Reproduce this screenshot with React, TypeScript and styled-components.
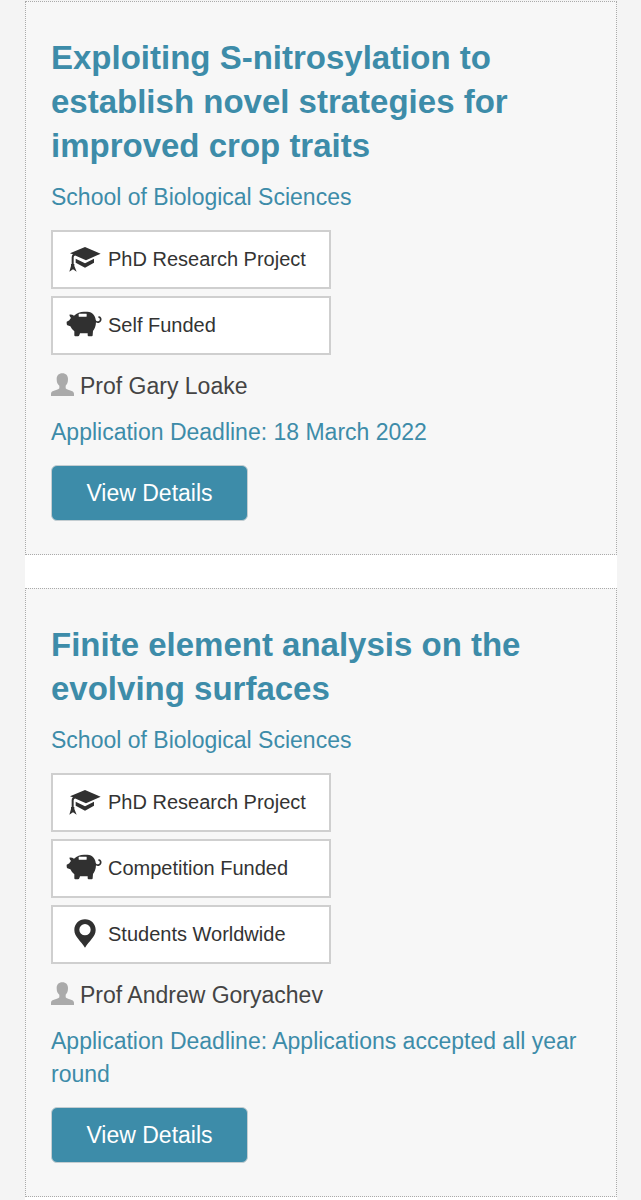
import React from "react";
import styled, { createGlobalStyle } from "styled-components";

const GlobalStyle = createGlobalStyle`
  *, *::before, *::after { box-sizing: border-box; }
  body {
    margin: 0;
    background: #f4f4f4;
    color: #444;
    font-family: "Liberation Sans", Arial, Helvetica, sans-serif;
    font-size: 23px;
    line-height: 33px;
  }
`;

const Page = styled.main`
  display: flex;
  flex-direction: column;
  gap: 33px;
  min-height: 100vh;
  margin: 0 24px 0 25px;
  padding: 1px 0 0;
  background: linear-gradient(#f4f4f4 1px, #fff 1px);
`;

const Card = styled.article`
  padding: 34px 25px 33px;
  border: 1px dotted #aaa;
  background: #f7f7f7;
`;

const Title = styled.h2`
  margin: 0 0 13px;
  font-size: 33px;
  line-height: 44px;
  font-weight: bold;
`;

const TitleLink = styled.a`
  color: #3d8ca9;
  text-decoration: none;
`;

const SchoolLink = styled.a`
  display: block;
  margin-bottom: 16px;
  color: #3d8ca9;
  text-decoration: none;
`;

const BadgeList = styled.ul`
  display: flex;
  flex-direction: column;
  gap: 7px;
  width: 280px;
  max-width: 100%;
  margin: 0 0 15px;
  padding: 0;
  list-style: none;
`;

const Badge = styled.li`
  display: flex;
  align-items: center;
  gap: 6px;
  height: 59px;
  padding: 0 13px;
  border: 2px solid #cfcfcf;
  background: #fff;
  color: #333;
  font-size: 20px;
`;

const BadgeIcon = styled.svg`
  flex: none;
  width: 36px;
  height: 32px;
`;

const Supervisor = styled.p`
  display: flex;
  align-items: center;
  gap: 5px;
  margin: 0 0 13px;
`;

const PersonIcon = styled.svg`
  flex: none;
  width: 24px;
  height: 28px;
`;

const Deadline = styled.p`
  margin: 0 0 16px;
  color: #3d8ca9;
`;

const DetailsButton = styled.button`
  display: block;
  width: 197px;
  height: 56px;
  padding: 0;
  border: 1px solid #c4cdd1;
  border-radius: 6px;
  background: #3d8ca9;
  color: #fff;
  font: inherit;
`;

type Kind = "degree" | "funding" | "location";

function KindIcon({ kind }: { kind: Kind }) {
  return (
    <BadgeIcon viewBox="0 0 108 96" aria-hidden="true" fill="#303030">
      {kind === "degree" && (
        <>
          <path d="M12 28L57 9L104 29L60 49L31 36L24 32Z" />
          <path d="M29 44L57 58L84 44V56L57 71L29 56Z" />
          <path d="M20 62V40Q20 33 28 31" fill="none" stroke="#303030" strokeWidth="6" />
          <path d="M15 60H25V66L32 83L21 76L10 83L15 66Z" />
        </>
      )}
      {kind === "funding" && (
        <>
          <path d="M10 14Q18 13 24 17Q37 5 54 5H64C80 5 90 19 90 36C90 49 85 58 81 63L80 76Q80 79 77 79H68Q65 79 65 76V70H42L40 76Q39 79 36 79H28Q25 79 25 76V64Q17 58 13 49L4 46Q2 45 2 40V36Q2 34 5 34L10 31Q12 27 15 24Q11 20 10 14Z" />
          <rect x="38" y="11" width="24" height="9" rx="1" fill="#fff" />
          <path d="M88 33C94 39 102 37 104 30Q105 23 99 21" fill="none" stroke="#303030" strokeWidth="5" strokeLinecap="round" />
        </>
      )}
      {kind === "location" && (
        <path
          fillRule="evenodd"
          d="M57 1C39 1 25 15 25 33C25 53 45 66 57 86C69 66 89 53 89 33C89 15 75 1 57 1ZM57 15A17 17 0 1 1 57 49A17 17 0 1 1 57 15Z"
        />
      )}
    </BadgeIcon>
  );
}

interface Project {
  title: string;
  badges: { kind: Kind; label: string }[];
  supervisor: string;
  deadline: string;
}

const projects: Project[] = [
  {
    title: "Exploiting S-nitrosylation to establish novel strategies for improved crop traits",
    badges: [
      { kind: "degree", label: "PhD Research Project" },
      { kind: "funding", label: "Self Funded" },
    ],
    supervisor: "Prof Gary Loake",
    deadline: "18 March 2022",
  },
  {
    title: "Finite element analysis on the evolving surfaces",
    badges: [
      { kind: "degree", label: "PhD Research Project" },
      { kind: "funding", label: "Competition Funded" },
      { kind: "location", label: "Students Worldwide" },
    ],
    supervisor: "Prof Andrew Goryachev",
    deadline: "Applications accepted all year round",
  },
];

export default function App() {
  return (
    <>
      <GlobalStyle />
      <Page>
        {projects.map((project) => (
          <Card key={project.title}>
            <Title>
              <TitleLink href="#">{project.title}</TitleLink>
            </Title>
            <SchoolLink href="#">School of Biological Sciences</SchoolLink>
            <BadgeList>
              {project.badges.map((badge) => (
                <Badge key={badge.label}>
                  <KindIcon kind={badge.kind} />
                  {badge.label}
                </Badge>
              ))}
            </BadgeList>
            <Supervisor>
              <PersonIcon viewBox="0 0 72 84" aria-hidden="true">
                <path
                  fill="#aaa"
                  d="M34 1C45 1 51 8 51 18C51 29 48 34 44 38V46C48 52 69 52 69 62V69H0V62C0 52 21 52 25 46V38C20 34 17 29 17 18C17 8 23 1 34 1Z"
                />
              </PersonIcon>
              {project.supervisor}
            </Supervisor>
            <Deadline>{`Application Deadline: ${project.deadline}`}</Deadline>
            <DetailsButton type="button">View Details</DetailsButton>
          </Card>
        ))}
      </Page>
    </>
  );
}
